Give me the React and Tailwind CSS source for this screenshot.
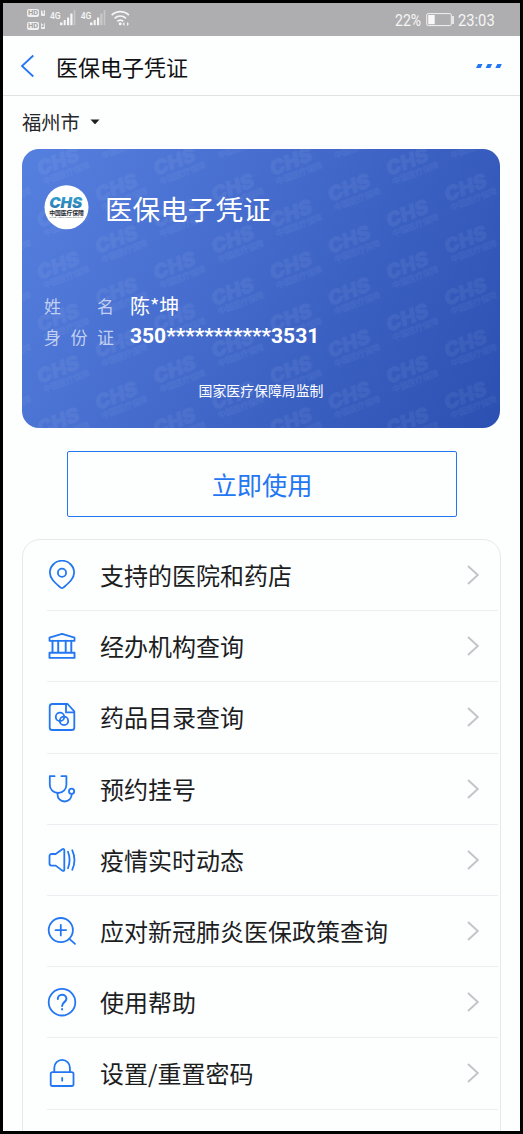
import React from "react";

const Icon = ({ children }) => (
  <svg width="30" height="30" viewBox="0 0 30 30" fill="none" stroke="#2377f2" strokeWidth="1.8" strokeLinecap="round" strokeLinejoin="round" className="shrink-0">
    {children}
  </svg>
);

const PinIcon = () => (
  <Icon>
    <path d="M15 28.2c-.6 0-1-.3-1.6-.8C8 22.600 2.900 18.500 2.900 12.800a12.100 12.100 0 0 1 24.200 0c0 5.700-5.100 9.800-10.500 14.600-.6.500-1 .8-1.600.8z" />
    <circle cx="15" cy="12.800" r="4.100" />
  </Icon>
);
const BankIcon = () => (
  <Icon>
    <path d="M2.500 6.600 15 2.800l12.500 3.800v3.200h-25z" />
    <path d="M5.500 9.800v12M11.200 9.800v12M18.700 9.800v12M24.300 9.800v12M2.500 21.800h25v5.100h-25z" strokeWidth="1.900" />
  </Icon>
);
const FileIcon = () => (
  <Icon>
    <path d="M20.600 2H5.300a2.600 2.600 0 0 0-2.600 2.600v20.800A2.600 2.600 0 0 0 5.300 28h19.400a2.600 2.600 0 0 0 2.600-2.600V9.300z" />
    <path d="M19 2.200v8.200h8" />
    <circle cx="13" cy="14.900" r="4.200" />
    <circle cx="17" cy="18.900" r="4.200" />
  </Icon>
);
const StethoscopeIcon = () => (
  <Icon>
    <path d="M7.600 2.200H2.800v8.500a8.300 8.300 0 0 0 16.600 0V2.200h-5" />
    <path d="M10.500 19v1.200c0 4.300 3 7.300 7 7.300 4.200 0 7.200-3 7.200-7.200v-.5" />
    <circle cx="24.600" cy="17.300" r="2.600" />
  </Icon>
);
const SpeakerIcon = () => (
  <Icon>
    <path d="M15.300 4.300 8.700 9H4.500a2 2 0 0 0-2 2v7.600a2 2 0 0 0 2 2h4.200l6.600 5c1 .7 2 .3 2-.9V5.100c0-1.200-1-1.500-2-.8z" />
    <path d="M21 6.800c2 5.200 2 11.200 0 16.400M25.300 5.300c2.700 6 2.700 13.400 0 19.400" />
  </Icon>
);
const ZoomIcon = () => (
  <Icon>
    <circle cx="13.800" cy="14.100" r="12.100" />
    <path d="M13.800 8.800v10.600M8.500 14.100h10.600M22.400 22.900l5.600 5" />
  </Icon>
);
const HelpIcon = () => (
  <Icon>
    <circle cx="15" cy="15.200" r="13.300" />
    <path d="M10.800 12.100c0-2.500 1.800-4.300 4.300-4.300s4.300 1.700 4.300 4c0 3.200-4.300 3.500-4.300 7.100M15.100 22v.4" strokeWidth="2" />
  </Icon>
);
const LockIcon = () => (
  <Icon>
    <rect x="3.700" y="14.200" width="22.800" height="13.800" rx="1.800" />
    <path d="M7.300 14V9.600a7.800 7.800 0 0 1 15.600 0V14M15.200 20v2.700" />
  </Icon>
);

const items = [
  ["支持的医院和药店", PinIcon],
  ["经办机构查询", BankIcon],
  ["药品目录查询", FileIcon],
  ["预约挂号", StethoscopeIcon],
  ["疫情实时动态", SpeakerIcon],
  ["应对新冠肺炎医保政策查询", ZoomIcon],
  ["使用帮助", HelpIcon],
  ["设置/重置密码", LockIcon],
];

const Signal = ({ dim }) => (
  <div className="flex items-start">
    <span className="mt-[1px] font-['Roboto'] text-[8.500px] font-semibold leading-[10px] text-[#f4f4f4]">4G</span>
    <svg width="17" height="18" viewBox="0 0 17 18" fill="#f6f6f6" className="-ml-px">
      <rect x="0" y="12.500" width="2.500" height="2.700" />
      <rect x="3.700" y="10" width="2" height="5.200" />
      <rect x="7" y="7.500" width="2.200" height="7.700" />
      <rect x="10.300" y="3.500" width="2.200" height="11.700" opacity={dim ? 0.4 : 1} />
      <rect x="13.700" y="0" width="1.600" height="15.200" opacity="0.35" />
    </svg>
  </div>
);

const HdBadge = ({ n }) => (
  <div className="flex h-[9px] items-center gap-[2px]">
    <span className="flex h-[8px] w-[12px] items-center justify-center rounded-[2px] bg-[#f0f0f0] text-[7.500px] font-bold leading-none text-[#a2a2a4]">HD</span>
    <span className="flex h-[6px] w-[4px] items-center justify-center rounded-[1px] bg-[#f0f0f0] text-[5px] font-bold leading-none text-[#909092]">{n}</span>
  </div>
);

const StatusBar = () => (
  <div className="flex h-[33px] shrink-0 justify-between bg-[#aeaeb0] pl-[24px] pr-[25px] font-['Roboto'] text-[#f6f6f6]">
    <div className="flex">
      <div className="mt-[5px] flex flex-col gap-[4px]">
        <HdBadge n="1" />
        <HdBadge n="2" />
      </div>
      <div className="ml-[5px] mt-[6px] flex gap-[4px] pt-[1px]">
        <Signal />
        <Signal dim />
      </div>
      <svg width="19" height="17" viewBox="0 0 19 17" fill="none" stroke="#f6f6f6" strokeWidth="1.800" className="ml-[4px] mt-[7px]">
        <path d="M.7 5.200c5-4.700 12.200-4.700 17.200 0M3.600 8.400c3.400-3 8-3 11.400 0M6.300 11.400c1.800-1.600 4.200-1.600 6 0" />
        <circle cx="9.200" cy="13.800" r="1.500" fill="#f6f6f6" stroke="none" />
        <path d="M11.500 14l2-2v4zM18 14l-2-2v4z" fill="#f6f6f6" stroke="none" />
      </svg>
    </div>
    <div className="flex items-center text-[16px] leading-[33px]">
      <span className="mt-px w-[31px]"><span className="inline-block origin-left scale-x-[0.88]">22%</span></span>
      <svg width="29" height="15" viewBox="0 0 29 15" className="-ml-px mr-[4px]">
        <rect x="1.700" y="1.600" width="24.600" height="12" rx="1.500" fill="none" stroke="#f2f2f2" strokeWidth="1" />
        <rect x="3.200" y="3" width="6.500" height="9.200" fill="#f8f8f8" />
        <rect x="27.200" y="4" width="1.600" height="8" fill="#f4f4f4" />
      </svg>
      <span className="mt-px w-[37px]"><span className="inline-block origin-left scale-x-[0.92]">23:03</span></span>
    </div>
  </div>
);

const Mark = ({ x, y }) => (
  <g transform={`translate(${x} ${y}) rotate(-21)`}>
    <text x="0" y="0" fontSize="20" fontWeight="900" fontStyle="italic" textLength="44" lengthAdjust="spacingAndGlyphs" fontFamily="Inter, sans-serif" stroke="#fff" strokeWidth="0.600">CHS</text>
    <text x="1" y="10" fontSize="8.500" fontWeight="700" textLength="49" fontFamily="'Noto Sans CJK SC', sans-serif">中国医疗保障</text>
  </g>
);

const Watermark = () => (
  <svg className="absolute inset-0 h-full w-full" aria-hidden="true">
    <defs>
      <pattern id="chs" x="12" y="-5" width="116.400" height="52" patternUnits="userSpaceOnUse">
        <g fill="#fff">
          <Mark x={6} y={32} />
          <Mark x={6} y={84} />
          <Mark x={6} y={-20} />
          <Mark x={64.200} y={6} />
          <Mark x={64.200} y={58} />
          <Mark x={64.200} y={110} />
        </g>
      </pattern>
    </defs>
    <rect width="100%" height="100%" fill="url(#chs)" opacity="0.055" />
  </svg>
);

const Logo = () => (
  <svg width="45" height="45" viewBox="0 0 45 45" className="shrink-0">
    <defs>
      <linearGradient id="logoBlue" x1="0" x2="0" y1="0" y2="1">
        <stop offset="0" stopColor="#35a9d5" />
        <stop offset="1" stopColor="#2a70a8" />
      </linearGradient>
    </defs>
    <circle cx="22.500" cy="22.300" r="22" fill="#fff" />
    <text x="5.200" y="23.200" fontSize="14.500" fontWeight="900" fontStyle="italic" textLength="33" lengthAdjust="spacingAndGlyphs" fontFamily="Inter, sans-serif" fill="url(#logoBlue)">CHS</text>
    <text x="5.300" y="30" fontSize="5.900" fontWeight="700" textLength="34.500" fontFamily="'Noto Sans CJK SC', sans-serif" fill="#1f2a33">中国医疗保障</text>
    <text x="5.500" y="33.200" fontSize="2" textLength="33.500" fontFamily="Roboto, sans-serif" fill="#52606a">CHINA HEALTHCARE SECURITY</text>
  </svg>
);

const Card = () => (
  <div className="relative ml-[19px] h-[279px] w-[478px] shrink-0 overflow-hidden rounded-[17px] bg-[linear-gradient(120deg,#5680df_0%,#446bcc_45%,#3a60c2_65%,#2c50b2_100%)] text-white">
    <Watermark />
    <div className="relative flex h-full flex-col">
      <div className="flex items-center gap-[16px] pl-[22px] pt-[36px]">
        <Logo />
        <h2 className="text-[27.600px] leading-[40px]">医保电子凭证</h2>
      </div>
      <dl className="ml-[22px] mt-[60px] grid grid-cols-[70px_1fr] gap-x-[16px] text-[17px] leading-[31px]">
        <dt className="flex justify-between text-[#c1cff1]"><span>姓</span><span>名</span></dt>
        <dd className="text-[20px]">陈*坤</dd>
        <dt className="flex justify-between text-[#c1cff1]"><span>身</span><span>份</span><span>证</span></dt>
        <dd className="font-['Roboto'] text-[21px] font-bold">350***********3531</dd>
      </dl>
      <p className="mt-[28px] text-center text-[13.900px] leading-[20px]">国家医疗保障局监制</p>
    </div>
  </div>
);

export default function App() {
  return (
    <div className="flex h-[1134px] w-[523px] flex-col overflow-hidden border-[3px] border-black bg-[#fdfefe] font-['Noto_Sans_CJK_SC',sans-serif] text-[#1c1d1f]">
      <StatusBar />
      <header className="flex h-[60px] shrink-0 items-center border-b border-[#e1e2e4] pl-[17px] pr-[17px]">
        <svg width="15" height="24" viewBox="0 0 15 24" fill="none" stroke="#2377f2" strokeWidth="1.800">
          <path d="M13.300 1.500 2 12l11.300 10.500" />
        </svg>
        <h1 className="ml-[21px] flex-1 text-[22px] leading-[30px] text-[#101114]">医保电子凭证</h1>
        <svg width="28" height="6" viewBox="0 0 28 6" fill="#2377f2">
          <path d="M3 1h4.500L5.700 5H1zM12.600 1h4.500l-1.800 4h-4.700zM22.300 1h4.500L25 5h-4.700z" />
        </svg>
      </header>
      <div className="flex h-[53px] shrink-0 items-center gap-[10px] pb-px pl-[19px] text-[19.300px] leading-[30px] text-[#26282b]">
        福州市
        <svg width="10" height="6" viewBox="0 0 10 6" fill="#1f2022"><path d="M.5.500h9L5.600 4.800Q5 5.400 4.400 4.800z" /></svg>
      </div>
      <Card />
      <button className="ml-[64px] mt-[23px] h-[66px] w-[390px] shrink-0 rounded-[2px] border-[1.500px] border-[#2377f2] text-[25.200px] leading-[60px] text-[#2377f2]">立即使用</button>
      <ul className="ml-[19px] mt-[22px] h-[640px] w-[479px] shrink-0 rounded-t-[18px] border border-[#e6e8ec] pl-[24px] pr-[2px]">
        {items.map(([label, Glyph]) => (
          <li key={label} className="flex h-[71.200px] items-center border-b border-[#eceef1] pr-[18px]">
            <Glyph />
            <span className="ml-[23px] flex-1 text-[24px] leading-[34px]">{label}</span>
            <svg width="14" height="20" viewBox="0 0 14 20" fill="none" stroke="#c3c4c9" strokeWidth="1.900"><path d="M2 1l9.800 9L2 19" /></svg>
          </li>
        ))}
      </ul>
    </div>
  );
}
